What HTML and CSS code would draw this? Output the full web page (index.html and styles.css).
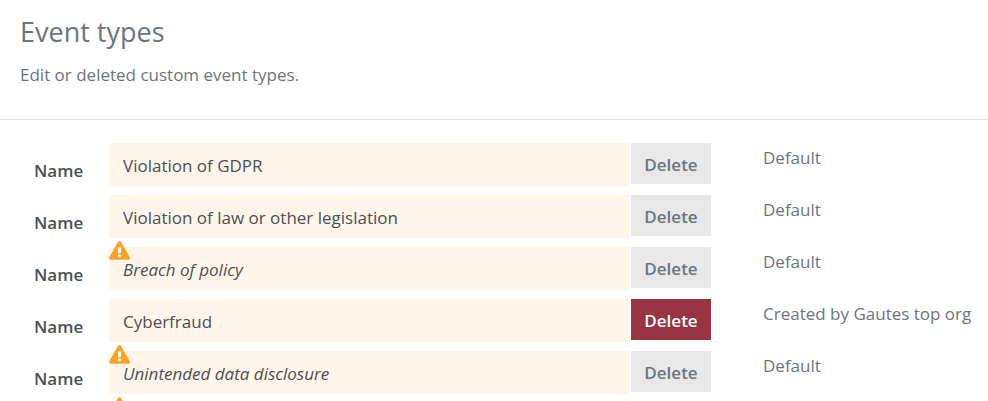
FILE: index.html
```html
<!DOCTYPE html>
<html lang="en">
<head>
    <meta charset="UTF-8">
    <meta name="viewport" content="width=device-width, initial-scale=1.0">
    <title>Event types</title>
    <link rel="stylesheet" href="styles.css">
</head>
<body>
    <svg class="sprite" aria-hidden="true">
        <symbol id="warning" viewBox="0 0 576 512">
            <path fill="#f8a326" d="M569.5 440c18.500 32-4.700 72-41.600 72H48.100c-36.900 0-60-40.100-41.600-72L246.400 24c18.500-32 64.700-32 83.200 0l239.900 416z"/>
            <path fill="#fff" d="M242 172h92l-9 162h-74z"/>
            <circle fill="#fff" cx="288" cy="402" r="44"/>
        </symbol>
    </svg>

    <header class="page-header">
        <h2>Event types</h2>
        <p>Edit or deleted custom event types.</p>
    </header>

    <main class="event-list">
        <div class="event-row">
            <label for="event1">Name</label>
            <div class="field">
                <input type="text" id="event1" value="Violation of GDPR">
            </div>
            <button type="button" class="btn" disabled>Delete</button>
            <span class="origin">Default</span>
        </div>
        <div class="event-row">
            <label for="event2">Name</label>
            <div class="field">
                <input type="text" id="event2" value="Violation of law or other legislation">
            </div>
            <button type="button" class="btn" disabled>Delete</button>
            <span class="origin">Default</span>
        </div>
        <div class="event-row">
            <label for="event3">Name</label>
            <div class="field untranslated">
                <svg class="warning"><use href="#warning"/></svg>
                <input type="text" id="event3" value="Breach of policy">
            </div>
            <button type="button" class="btn" disabled>Delete</button>
            <span class="origin">Default</span>
        </div>
        <div class="event-row">
            <label for="event4">Name</label>
            <div class="field">
                <input type="text" id="event4" value="Cyberfraud">
            </div>
            <button type="button" class="btn btn-danger">Delete</button>
            <span class="origin">Created by Gautes top org</span>
        </div>
        <div class="event-row">
            <label for="event5">Name</label>
            <div class="field untranslated">
                <svg class="warning"><use href="#warning"/></svg>
                <input type="text" id="event5" value="Unintended data disclosure">
            </div>
            <button type="button" class="btn" disabled>Delete</button>
            <span class="origin">Default</span>
        </div>
        <div class="event-row">
            <label for="event6">Name</label>
            <div class="field untranslated">
                <svg class="warning"><use href="#warning"/></svg>
                <input type="text" id="event6">
            </div>
            <button type="button" class="btn" disabled>Delete</button>
            <span class="origin">Default</span>
        </div>
    </main>
</body>
</html>
```
FILE: styles.css
```css
* {
    box-sizing: border-box;
}
body {
    font-family: 'Segoe UI', 'Open Sans', 'Noto Sans', sans-serif;
    font-size: 17px;
    line-height: 24px;
    background-color: white;
    color: #6c757d;
    margin: 0;
    height: 100vh;
    overflow: hidden;
}
.sprite {
    display: none;
}
.page-header {
    padding: 16px 20px 32px;
    border-bottom: 1px solid #dee2e6;
}
.page-header h2 {
    font-size: 27px;
    font-weight: 400;
    line-height: 32px;
    margin: 0 0 15px;
}
.page-header p {
    margin: 0;
}
.event-list {
    display: grid;
    gap: 9px;
    padding: 23px 0 23px 34px;
}
.event-row {
    display: grid;
    grid-template-columns: 75px 1fr 80px 277px;
    align-items: start;
}
.event-row label {
    color: #495057;
    font-weight: 600;
    padding-top: 16px;
}
.field {
    position: relative;
    margin-right: 1px;
}
.field input {
    display: block;
    width: 100%;
    height: 43px;
    border: none;
    border-radius: 0;
    padding: 2px 14px 0;
    background-color: #fff6e9;
    color: #495057;
    font: inherit;
}
.untranslated input {
    font-style: italic;
}
.warning {
    position: absolute;
    top: -6px;
    left: 0;
    width: 21px;
    height: 19px;
}
.btn {
    height: 41px;
    border: none;
    padding: 2px 0 0;
    background-color: #e8e8e8;
    color: #6c757d;
    font: inherit;
    font-weight: 600;
}
.btn-danger {
    background-color: #973542;
    color: white;
    cursor: pointer;
}
.origin {
    padding: 3px 0 0 52px;
    white-space: nowrap;
}
```
